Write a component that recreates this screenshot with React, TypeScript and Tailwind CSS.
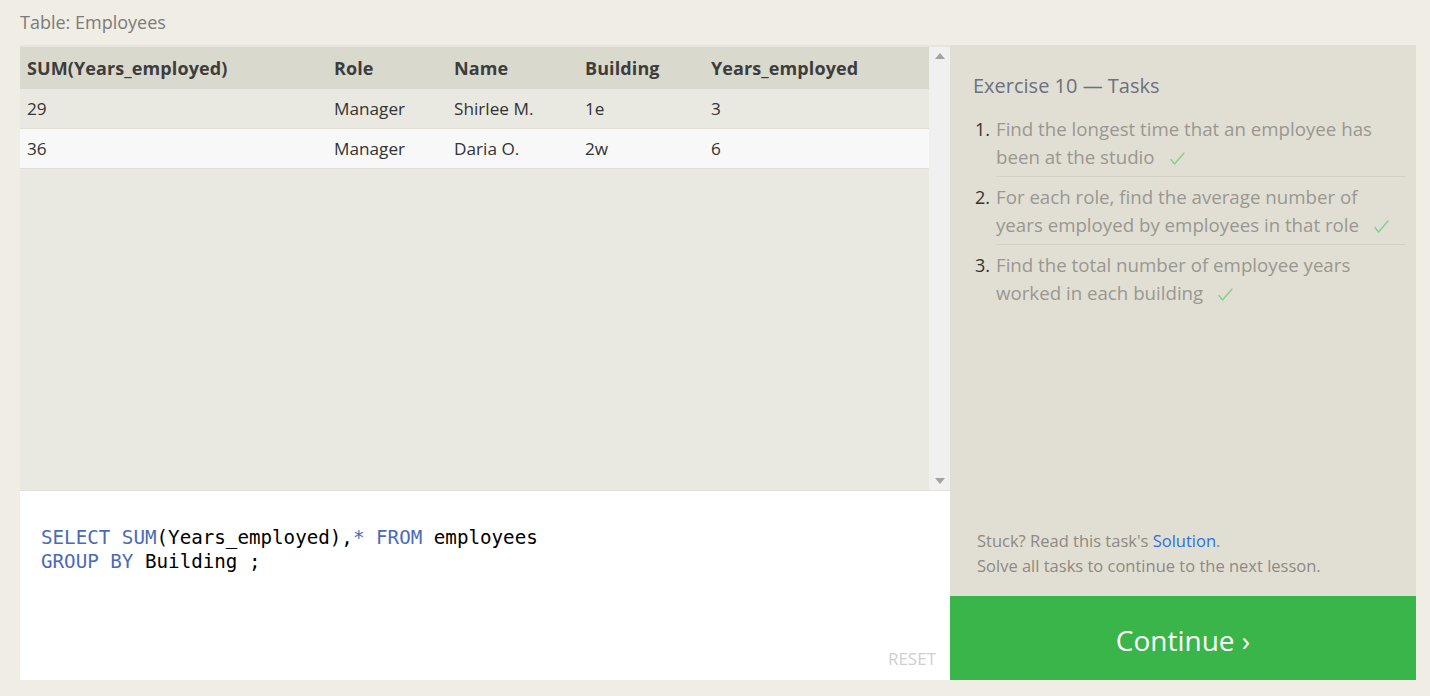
import React from "react";

const SANS = "font-['Open_Sans','Noto_Sans',sans-serif]";

const ROWS = [
  { sum: "29", role: "Manager", name: "Shirlee M.", building: "1e", years: "3" },
  { sum: "36", role: "Manager", name: "Daria O.", building: "2w", years: "6" },
];

const TASKS = [
  ["Find the longest time that an employee has", "been at the studio"],
  ["For each role, find the average number of", "years employed by employees in that role"],
  ["Find the total number of employee years", "worked in each building"],
];

function Check() {
  return (
    <svg
      className="ml-[15px] inline-block align-[-1px]"
      width="15"
      height="13"
      viewBox="0 0 15 13"
      fill="none"
      stroke="#84cf8f"
      strokeWidth="1.4"
      strokeLinecap="round"
      strokeLinejoin="round"
    >
      <path d="M1 7.5 L4.5 12 L14 1" />
    </svg>
  );
}

export default function App() {
  return (
    <div className={`h-[696px] w-[1430px] overflow-hidden bg-[#f0ede5] ${SANS}`}>
      {/* Title */}
      <div className="h-[45px] pl-[20px] pt-[9px] text-[18px] leading-[26px] text-[#7b7b7b]">
        Table: Employees
      </div>

      <div className="ml-[20px] flex h-[635px] w-[1396px]">
        {/* Left: table + editor */}
        <div className="flex w-[930px] flex-col">
          <div className="flex h-[445px] border-t-2 border-[#e6e4dc] bg-[#eae9e1]">
            <div className="flex-1">
              <div className="grid h-[42px] grid-cols-[307px_120px_131px_126px_1fr] items-center bg-[#dad9cd] pl-[7px] text-[18px] font-bold tracking-[0.1px] text-[#3d3d3d]">
                <div>SUM(Years_employed)</div>
                <div>Role</div>
                <div>Name</div>
                <div>Building</div>
                <div>Years_employed</div>
              </div>
              {ROWS.map((r, i) => (
                <div
                  key={r.sum}
                  className={`grid h-[40px] grid-cols-[307px_120px_131px_126px_1fr] items-center border-b border-[#e0ded6] pl-[7px] text-[17.2px] text-[#333] ${
                    i % 2 ? "bg-[#f8f8f8]" : "bg-[#eae9e1]"
                  }`}
                >
                  <div>{r.sum}</div>
                  <div>{r.role}</div>
                  <div>{r.name}</div>
                  <div>{r.building}</div>
                  <div>{r.years}</div>
                </div>
              ))}
            </div>
            {/* Scrollbar */}
            <div className="flex w-[21px] flex-col items-center justify-between bg-[#f0f0f0] py-[6px]">
              <svg width="10" height="6" viewBox="0 0 10 6">
                <path d="M5 0 L10 6 L0 6 Z" fill="#a3a3a3" />
              </svg>
              <svg width="10" height="6" viewBox="0 0 10 6">
                <path d="M0 0 L10 0 L5 6 Z" fill="#a3a3a3" />
              </svg>
            </div>
          </div>

          {/* Editor */}
          <div className="relative flex-1 border-t border-[#e2e0d8] bg-white pl-[21px] pt-[35px] font-['DejaVu_Sans_Mono',monospace] text-[19.2px] leading-[24px] text-black">
            <div>
              <span className="text-[#4b6bb5]">SELECT SUM</span>(Years_employed),<span className="text-[#4b6bb5]">* FROM</span> employees
            </div>
            <div>
              <span className="text-[#4b6bb5]">GROUP BY</span> Building ;
            </div>
            <div className={`absolute bottom-[9px] right-[14px] text-[17px] text-[#cfcfcf] ${SANS}`}>RESET</div>
          </div>
        </div>

        {/* Right: tasks */}
        <div className="flex flex-1 flex-col bg-[#e1dfd4]">
          <div className="flex-1 pl-[23px] pr-[11px] pt-[27px]">
            <div className="text-[20px] leading-[28px] text-[#6c7080]">Exercise 10 — Tasks</div>
            <ol className="mt-[15px] text-[18.7px] leading-[28px] text-[#9a9791]">
              {TASKS.map((t, i) => (
                <li key={i} className="flex">
                  <span className="w-[23px] shrink-0 pl-[2px] text-[18px] text-[#333]">{i + 1}.</span>
                  <div
                    className={`flex-1 pb-[5px] ${i < 2 ? "mb-[6px] border-b border-[#d3d1c6]" : ""}`}
                  >
                    <div className="whitespace-nowrap">{t[0]}</div>
                    <div className="whitespace-nowrap">
                      {t[1]}
                      <Check />
                    </div>
                  </div>
                </li>
              ))}
            </ol>
          </div>
          <div className="pb-[18px] pl-[27px] text-[16.5px] leading-[25px] text-[#8f8882]">
            <div>
              Stuck? Read this task's <span className="text-[#2f6fe0]">Solution</span>.
            </div>
            <div>Solve all tasks to continue to the next lesson.</div>
          </div>
          <div className="flex h-[84px] items-center justify-center bg-[#3ab54a] pt-[3px] text-[28px] text-white">
            Continue ›
          </div>
        </div>
      </div>
    </div>
  );
}
